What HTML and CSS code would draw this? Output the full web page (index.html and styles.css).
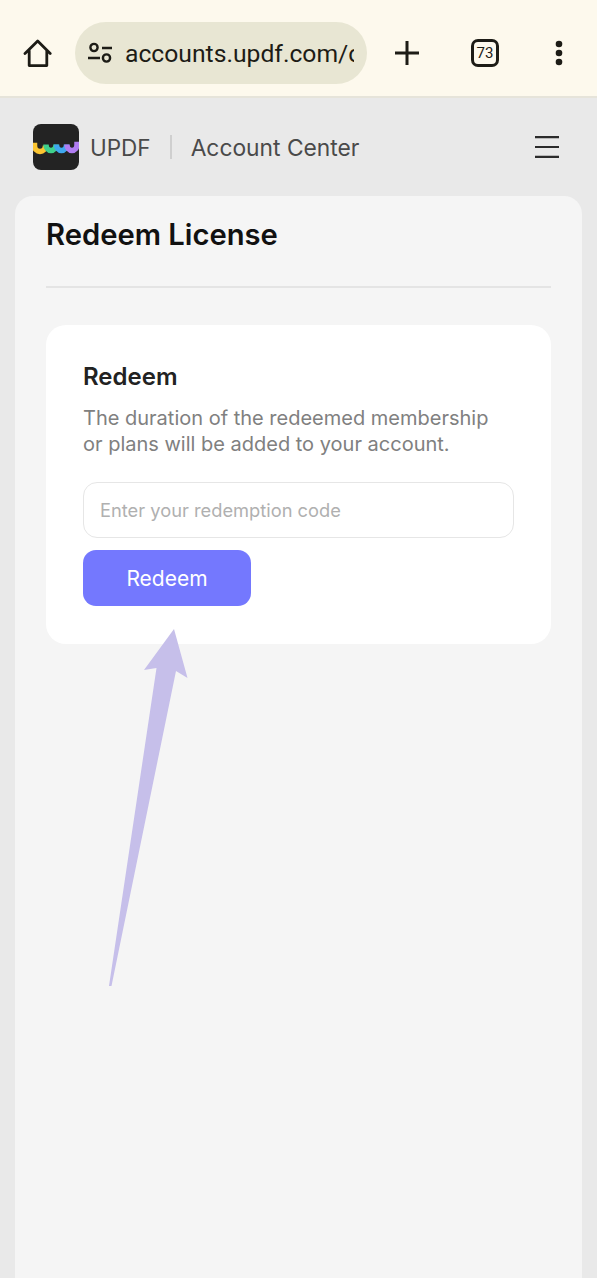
FILE: index.html
```html
<!DOCTYPE html>
<html lang="en">
<head>
<meta charset="utf-8">
<title>Redeem License</title>
<link rel="stylesheet" href="styles.css">
</head>
<body>
<div class="screen">
  <div class="toolbar">
    <svg class="home" viewBox="0 0 30 30" width="30" height="30"><path d="M3 15.500 15.700 3 28.200 15.500M7.200 12.500V27.600H24.800V12.500" fill="none" stroke="#1d1c16" stroke-width="2.800" stroke-linejoin="round" stroke-linecap="round"/></svg>
    <div class="omnibox">
      <svg class="tune" viewBox="0 0 26 22" width="26" height="22"><circle cx="7" cy="5.500" r="3.600" fill="none" stroke="#1d1c16" stroke-width="2.400"/><path d="M15 6h10M1 16h12" stroke="#1d1c16" stroke-width="2.400" fill="none"/><circle cx="19.500" cy="16" r="3.600" fill="none" stroke="#1d1c16" stroke-width="2.400"/></svg>
      <div class="url">accounts.updf.com/c</div>
    </div>
    <svg class="plus" viewBox="0 0 26 26" width="26" height="26"><path d="M13 1v24M1 13h24" stroke="#1d1c16" stroke-width="3" fill="none"/></svg>
    <div class="tabs">73</div>
    <svg class="dots" viewBox="0 0 10 26" width="10" height="26"><circle cx="5" cy="4" r="3.300" fill="#1d1c16"/><circle cx="5" cy="13" r="3.300" fill="#1d1c16"/><circle cx="5" cy="22" r="3.300" fill="#1d1c16"/></svg>
  </div>
  <div class="header">
    <svg class="logo" viewBox="0 0 46 46" width="46" height="46">
      <rect width="46" height="46" rx="8" fill="#232323"/>
      <path d="M0 21.500h1.500a5.500 6 0 0 0 11 0" fill="none" stroke="#fbc531" stroke-width="5.500"/>
      <path d="M13 20.500a5 6 0 0 0 10 0" fill="none" stroke="#3fd08c" stroke-width="5.500"/>
      <path d="M23.500 20.500a5 6 0 0 0 10 0" fill="none" stroke="#3fa8ee" stroke-width="5.500"/>
      <path d="M34 20.500a5 6 0 0 0 10 0H46" fill="none" stroke="#b07df2" stroke-width="5.500"/>
    </svg>
    <span class="brand">UPDF</span>
    <span class="sep"></span>
    <span class="center">Account Center</span>
    <svg class="menu" viewBox="0 0 24 22" width="24" height="22"><path d="M0 1.200h24M0 11h24M0 20.800h24" stroke="#2b2b2b" stroke-width="2.200" fill="none"/></svg>
  </div>
  <main class="panel">
    <h1 class="title">Redeem License</h1>
    <div class="card">
      <h2 class="card-title">Redeem</h2>
      <p class="desc">The duration of the redeemed membership or plans will be added to your account.</p>
      <div class="input">Enter your redemption code</div>
      <div class="button">Redeem</div>
    </div>
  </main>
  <svg class="arrow" viewBox="0 0 597 1278" width="597" height="1278"><path d="M174 629 187.500 678 176 671 111.500 986 109 986 156.500 668 144 670Z" fill="#c6bfea"/></svg>
</div>
</body>
</html>
```
FILE: styles.css
```css
* { box-sizing: border-box; }
html, body { margin: 0; padding: 0; }
body { width: 597px; height: 1278px; overflow: hidden; background: #e9e9e9; font-family: "Inter", "Noto Sans", sans-serif; }
.screen { position: relative; width: 597px; height: 1278px; overflow: hidden; display: flex; flex-direction: column; }
.toolbar { flex: none; height: 98px; background: #fdf9ed; border-bottom: 2px solid #e6e4da; display: flex; align-items: center; padding: 10px 0 0 22px; }
.home { flex: none; }
.omnibox { flex: none; margin-left: 23px; width: 292px; height: 62px; border-radius: 31px; background: #e8e6d3; display: flex; align-items: center; padding-left: 12px; }
.tune { flex: none; }
.url { margin-left: 12px; width: 229px; overflow: hidden; white-space: nowrap; font-family: "Roboto", sans-serif; font-size: 24.700px; color: #1d1c16; }
.plus { flex: none; margin-left: 27px; }
.tabs { flex: none; margin-left: 51px; width: 28px; height: 28px; border: 3px solid #1d1c16; border-radius: 7px; display: flex; align-items: center; justify-content: center; font-family: "Roboto", sans-serif; font-size: 15px; color: #1d1c16; }
.dots { flex: none; margin-left: 55px; }
.header { flex: none; height: 98px; display: flex; align-items: center; padding: 0 38px 0 33px; }
.logo { flex: none; }
.brand { margin-left: 11px; font-size: 22.500px; color: #4a4a4a; }
.sep { margin: 0 19px; width: 2px; height: 24px; background: #cfcfcf; }
.center { font-size: 22.800px; color: #4a4a4a; flex: 1; }
.menu { flex: none; }
.panel { flex: 1; margin: 0 15px; padding: 0 31px; background: #f5f5f5; border-radius: 18px 18px 0 0; }
.title { margin: 0; height: 92px; border-bottom: 2px solid #e4e4e4; padding-top: 20px; font-size: 29.200px; line-height: 38px; font-weight: 600; color: #111; }
.card { margin-top: 37px; height: 319px; background: #fff; border-radius: 20px; padding: 37px 37px 0; }
.card-title { margin: 0; font-size: 24px; line-height: 30px; font-weight: 600; color: #222; }
.desc { margin: 13px 0 0; max-width: 415px; font-size: 20px; line-height: 26px; color: #808080; }
.input { margin-top: 25px; height: 56px; border: 1.500px solid #e6e6e6; border-radius: 14px; padding-left: 16px; display: flex; align-items: center; font-size: 18.300px; color: #b0b0b0; }
.button { margin-top: 12px; width: 168px; height: 56px; border-radius: 13px; background: #7478fe; color: #fff; font-size: 21px; display: flex; align-items: center; justify-content: center; }
.arrow { position: absolute; left: 0; top: 0; pointer-events: none; }
```
